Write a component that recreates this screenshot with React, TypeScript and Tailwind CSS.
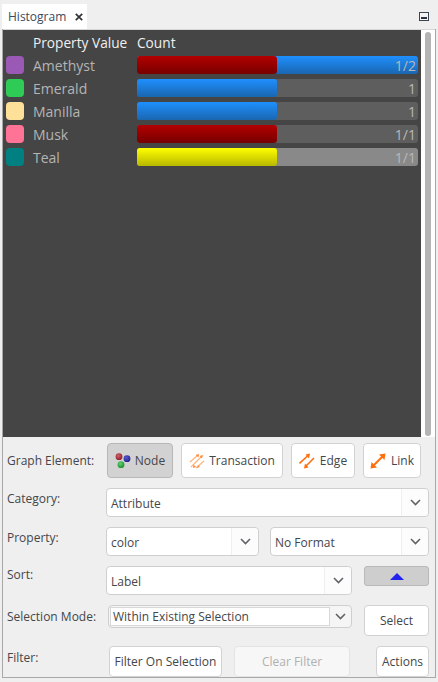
const rows = [
  { name: "Amethyst", color: "bg-[#9b59b6]", bar: "bg-gradient-to-b from-[#b30000] to-[#780000]", track: "bg-gradient-to-b from-[#1e90ff] to-[#1a66b0]", label: "1/2" },
  { name: "Emerald", color: "bg-[#2ecc56]", bar: "bg-gradient-to-b from-[#1e90ff] to-[#1a66b0]", track: "bg-[#5e5e5e]", label: "1" },
  { name: "Manilla", color: "bg-[#ffe099]", bar: "bg-gradient-to-b from-[#1e90ff] to-[#1a66b0]", track: "bg-[#5e5e5e]", label: "1" },
  { name: "Musk", color: "bg-[#ff7396]", bar: "bg-gradient-to-b from-[#b30000] to-[#780000]", track: "bg-[#5e5e5e]", label: "1/1" },
  { name: "Teal", color: "bg-[#008080]", bar: "bg-gradient-to-b from-[#ffff00] to-[#b8b800]", track: "bg-[#898989]", label: "1/1" },
];

function Chevron() {
  return (
    <svg width="11" height="7" viewBox="0 0 11 7" fill="none" stroke="#5f6366" strokeWidth="1.6">
      <path d="M1 1l4.500 4.500L10 1" />
    </svg>
  );
}

function Select({ text, className }: { text: string; className: string }) {
  return (
    <div className={`flex h-[29px] items-stretch rounded-[4px] border border-[#cfcfcf] bg-white ${className}`}>
      <span className="flex-1 truncate pt-[1px] pl-1 leading-[28px]">{text}</span>
      <span className="flex w-[27px] items-center justify-center rounded-r-[4px] border-l border-[#efefef] bg-[#fcfcfc]">
        <Chevron />
      </span>
    </div>
  );
}

function NodeIcon() {
  return (
    <svg width="16" height="16" viewBox="0 0 16 16">
      <defs>
        <radialGradient id="dotRed" cx="40%" cy="35%" r="70%"><stop offset="0%" stopColor="#d0606a" /><stop offset="100%" stopColor="#8a1c28" /></radialGradient>
        <radialGradient id="dotBlue" cx="40%" cy="35%" r="70%"><stop offset="0%" stopColor="#5a5ad0" /><stop offset="100%" stopColor="#1c1c88" /></radialGradient>
        <radialGradient id="dotGreen" cx="40%" cy="35%" r="70%"><stop offset="0%" stopColor="#60d070" /><stop offset="100%" stopColor="#1c8a2c" /></radialGradient>
      </defs>
      <circle cx="4" cy="3.700" r="3.400" fill="url(#dotRed)" />
      <circle cx="12" cy="5.700" r="3.400" fill="url(#dotBlue)" />
      <circle cx="6" cy="11.700" r="3.400" fill="url(#dotGreen)" />
    </svg>
  );
}

function TransactionIcon() {
  return (
    <svg width="16" height="16" viewBox="0 0 16 16" fill="none" stroke="#ffb27a" strokeWidth="1.100">
      <path d="M1 9l8-7M2 14L13 3M7 15l8-7" />
      <path d="M10 1L6.500 2 9.500 4.500zM14 2l-3.500 1 2.500 2.500zM4 15l3-1-2.500-2.500zM8 15l3-1-2-2z" fill="#ff8c3c" stroke="none" />
    </svg>
  );
}

function EdgeIcon() {
  return (
    <svg width="16" height="16" viewBox="0 0 16 16" fill="none" stroke="#ff6f0f" strokeWidth="1.600">
      <path d="M.5 10.500L9 2.500M15 5L7 13" />
      <path d="M11 .5L6.500 1.500 10 5.500zM5 15.500L9.500 14.500 6 10.500z" fill="#ff6f0f" stroke="none" />
    </svg>
  );
}

function LinkIcon() {
  return (
    <svg width="16" height="16" viewBox="0 0 16 16" fill="none" stroke="#ff6f0f" strokeWidth="2">
      <path d="M3 13L13 3" />
      <path d="M15.500 .500L9 1.500 14.500 7zM.500 15.500L7 14.500 1.500 9z" fill="#ff6f0f" stroke="none" />
    </svg>
  );
}

export default function App() {
  return (
    <div className="flex h-[682px] w-[438px] flex-col overflow-hidden bg-[#efefef] text-[12px] text-[#44464a] [font-family:'Open_Sans',sans-serif]">
      <div className="flex h-[29px] shrink-0 items-end justify-between pl-[2px] pr-[9px]">
        <div className="flex h-[25px] w-[85px] items-center gap-[9px] bg-white pl-[6px] text-[#3c4a5c]">
          <span>Histogram</span>
          <svg width="8" height="8" viewBox="0 0 8 8" fill="none" stroke="#333" strokeWidth="1.700">
            <path d="M.8.800l6.400 6.400M7.200.800L.8 7.200" />
          </svg>
        </div>
        <div className="mb-[8px] flex h-[9px] w-[10px] items-end justify-center border border-[#3c4454] bg-[#f5f5f5] pb-[1px]">
          <div className="h-[2px] w-[6px] bg-[#2c3444]" />
        </div>
      </div>
      <div className="mr-[2px] ml-[2px] flex h-[649px] flex-col border-x border-b border-[#a8a8a8]">
        <div className="flex h-[408px] shrink-0 border-t border-[#d6d6d6]">
          <div className="w-[418px] bg-[#454545] text-[14px]">
            <div className="flex h-[26px] items-center text-[#f0f0f0]">
              <span className="ml-[30px] w-[104px] text-[13.700px]">Property Value</span>
              <span className="text-[13.700px]">Count</span>
            </div>
            <div className="flex flex-col gap-[5px]">
              {rows.map((r) => (
                <div key={r.name} className="flex h-[18px] items-center">
                  <div className={`ml-[3px] h-[18px] w-[18px] rounded-[4px] ${r.color}`} />
                  <span className="ml-[9px] w-[104px] text-[#b4b4b4]">{r.name}</span>
                  <div className={`relative flex h-[18px] w-[281px] justify-end rounded-[3px] pr-[2px] leading-[19px] text-[#b8b8b8] ${r.track}`}>
                    <div className={`absolute top-0 bottom-0 left-0 w-[140px] rounded-[3px] ${r.bar}`} />
                    <span>{r.label}</span>
                  </div>
                </div>
              ))}
            </div>
          </div>
          <div className="flex flex-1 justify-center bg-white pt-[2px]">
            <div className="h-[404px] w-[6px] rounded-[3px] bg-[#b4b4b4]" />
          </div>
        </div>
        <div className="flex flex-1 flex-col px-[4px] pt-[6px] text-[12px]">
          <div className="flex h-[35px] items-center">
            <span className="w-[100px] pt-[1px]">Graph Element:</span>
            <div className="flex h-[35px] gap-[8px]">
              <div className="flex w-[66px] items-center justify-center gap-[4px] rounded-[4px] border border-[#b8b8b8] bg-[#d2d2d2]"><NodeIcon /><span className="pt-[1px]">Node</span></div>
              <div className="flex w-[102px] items-center justify-center gap-[4px] rounded-[4px] border border-[#d2d2d2] bg-white"><TransactionIcon /><span className="pt-[1px]">Transaction</span></div>
              <div className="flex w-[64px] items-center justify-center gap-[5px] rounded-[4px] border border-[#d2d2d2] bg-white"><EdgeIcon /><span className="pt-[1px]">Edge</span></div>
              <div className="flex w-[58px] items-center justify-center gap-[5px] rounded-[4px] border border-[#d2d2d2] bg-white"><LinkIcon /><span className="pt-[1px]">Link</span></div>
            </div>
          </div>
          <div className="mt-[10px] flex items-start">
            <span className="w-[99px] pt-[2px]">Category:</span>
            <Select text="Attribute" className="w-[323px]" />
          </div>
          <div className="mt-[10px] flex items-start">
            <span className="w-[99px] pt-[2px]">Property:</span>
            <Select text="color" className="w-[153px]" />
            <Select text="No Format" className="ml-[11px] w-[159px]" />
          </div>
          <div className="mt-[10px] flex items-start">
            <span className="w-[99px]">Sort:</span>
            <Select text="Label" className="w-[246px]" />
            <div className="ml-[12px] flex h-[20px] w-[65px] items-center justify-center rounded-[3px] border border-[#b8b8b8] bg-[#cecece]">
              <div className="h-0 w-0 border-x-[7px] border-b-[7px] border-x-transparent border-b-[#2222ee]" />
            </div>
          </div>
          <div className="mt-[10px] flex items-start">
            <span className="w-[101px] pt-[3px]">Selection Mode:</span>
            <div className="flex h-[23px] w-[244px] items-stretch rounded-[4px] border border-[#cfcfcf] bg-[#f5f5f5] p-[1px] pr-0">
              <span className="flex-1 border border-[#d8d8d8] bg-white pl-[2px] leading-[18px]">Within Existing Selection</span>
              <span className="flex w-[21px] items-center justify-center"><Chevron /></span>
            </div>
            <div className="ml-[12px] flex h-[31px] w-[65px] items-center justify-center rounded-[4px] border border-[#d2d2d2] bg-white">Select</div>
          </div>
          <div className="mt-[10px] flex items-start">
            <span className="w-[102px] pt-[3px]">Filter:</span>
            <div className="flex h-[31px] w-[113px] items-center justify-center rounded-[4px] border border-[#d2d2d2] bg-white">Filter On Selection</div>
            <div className="ml-[12px] flex h-[31px] w-[116px] items-center justify-center rounded-[4px] border border-[#e4e4e4] bg-[#f7f7f7] text-[#b0b0b0]">Clear Filter</div>
            <div className="ml-[26px] flex h-[31px] w-[53px] items-center justify-center rounded-[4px] border border-[#d2d2d2] bg-white">Actions</div>
          </div>
        </div>
      </div>
    </div>
  );
}
